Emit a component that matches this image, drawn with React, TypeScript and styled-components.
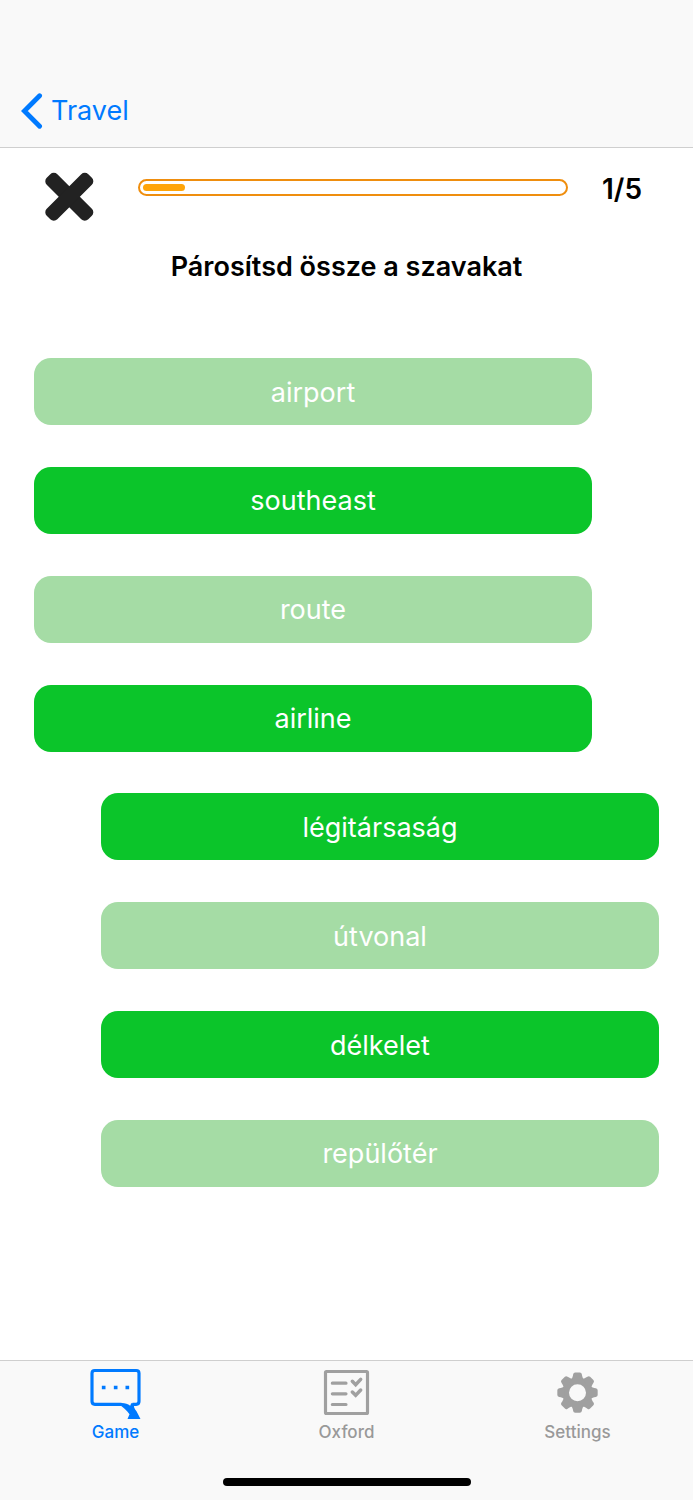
import React from "react";
import styled, { createGlobalStyle } from "styled-components";

const GlobalStyle = createGlobalStyle`
  * { box-sizing: border-box; }
  body {
    margin: 0;
    background: #fff;
    color: #000;
    font-family: Inter, "Liberation Sans", sans-serif;
  }
`;

const Screen = styled.div`
  display: flex;
  flex-direction: column;
  min-height: 100vh;
`;

const NavBar = styled.header`
  display: flex;
  padding: 89px 21px 14px;
  background: #f9f9f9;
  border-bottom: 1px solid #cfcfcf;
`;

const BackLink = styled.a`
  display: flex;
  align-items: center;
  gap: 8px;
  height: 44px;
  color: #007aff;
  font-size: 27px;
  line-height: 44px;
  text-decoration: none;
`;

const Game = styled.main`
  flex: 1;
  display: flex;
  flex-direction: column;
  padding: 24px 34px 173px;
`;

const StatusRow = styled.div`
  display: flex;
  align-items: flex-start;
  padding: 0 17px 0 10px;
`;

const CloseButton = styled.button`
  display: flex;
  margin: 0;
  padding: 0;
  border: 0;
  background: none;
  cursor: pointer;
`;

const Track = styled.div`
  flex: 1;
  height: 17px;
  margin: 7px 34px 0 44px;
  padding: 3px;
  border: 2px solid #ef8e0e;
  border-radius: 9px;
`;

const Fill = styled.div`
  height: 7px;
  border-radius: 4px;
  background: #ffa50a;
`;

const Counter = styled.span`
  font-size: 28px;
  font-weight: 600;
  line-height: 34px;
`;

const Title = styled.h1`
  margin: 28px 0 74px;
  font-size: 27px;
  font-weight: 600;
  line-height: 34px;
  text-align: center;
`;

const WordList = styled.div`
  flex: 1;
  display: flex;
  flex-direction: column;
  justify-content: space-between;
  gap: 16px;
`;

const WordButton = styled.button<{ $side: "left" | "right"; $matched: boolean }>`
  height: 67px;
  margin: ${(p) => (p.$side === "left" ? "0 67px 0 0" : "0 0 0 67px")};
  padding: 2px 16px 0;
  border: 0;
  border-radius: 17px;
  background: ${(p) => (p.$matched ? "#a5dca5" : "#0bc52a")};
  color: #fff;
  font: inherit;
  font-size: 27px;
  line-height: 34px;
  cursor: pointer;
`;

const TabBar = styled.nav`
  display: flex;
  padding-top: 7px;
  background: #f9f9f9;
  border-top: 1px solid #cfcfcf;
`;

const Tab = styled.a<{ $active?: boolean }>`
  flex: 1;
  display: flex;
  flex-direction: column;
  align-items: center;
  color: ${(p) => (p.$active ? "#007aff" : "#999")};
  font-size: 17px;
  font-weight: 500;
  line-height: 24px;
  text-decoration: none;
`;

const HomeArea = styled.footer`
  display: flex;
  justify-content: center;
  padding: 34px 0 14px;
  background: #f9f9f9;
`;

const HomeIndicator = styled.div`
  width: 248px;
  height: 8px;
  border-radius: 4px;
  background: #000;
`;

const BackIcon = () => (
  <svg width="22" height="36" viewBox="0 0 22 36" fill="none" aria-hidden="true">
    <path d="M18.600 2.800L3.400 18L18.600 33.200" stroke="currentColor" strokeWidth="4.800" strokeLinecap="round" strokeLinejoin="miter" />
  </svg>
);

const CrossIcon = () => (
  <svg width="50" height="50" viewBox="-25.300 -24.700 50 50" fill="#222" aria-hidden="true">
    <rect x="-29.400" y="-7.500" width="58.800" height="15" rx="5" transform="rotate(45)" />
    <rect x="-29.400" y="-7.500" width="58.800" height="15" rx="5" transform="rotate(-45)" />
  </svg>
);

const ChatIcon = () => (
  <svg width="52" height="52" viewBox="60.500 54 156 156" fill="none" aria-hidden="true">
    <path
      d="M155 163H75Q66.500 163 66.500 154V70Q66.500 61.500 75 61.500H199Q207.500 61.500 207.500 70V154Q207.500 163 199 163H188"
      stroke="currentColor"
      strokeWidth="9.500"
    />
    <path d="M146 160C158 172 172 182 179 193L173 207H212L200 184C194 177 191 170 192 160L184 160C182 165 182 166 181 167C174 162 166 159 156 159Z" fill="currentColor" />
    <path d="M96 107h11v11h-11zM132 107h11v11h-11zM167 107h11v11h-11z" fill="currentColor" />
  </svg>
);

const ChecklistIcon = () => (
  <svg width="52" height="52" viewBox="75 54 156 156" fill="none" stroke="#a0a0a0" aria-hidden="true">
    <rect x="88.500" y="64.500" width="126" height="126" rx="3" strokeWidth="9.500" />
    <path d="M109 99.500H150M109 131.500H150M109 163.500H150" strokeWidth="9.500" strokeLinecap="round" />
    <path d="M169 94L179 104L194 88M169 126L179 136L194 120" strokeWidth="10.500" strokeLinecap="round" />
  </svg>
);

const TEETH = [0, 45, 90, 135, 180, 225, 270, 315];

const GearIcon = () => (
  <svg width="52" height="52" viewBox="-76.500 -74 156 156" fill="#a0a0a0" aria-hidden="true">
    <circle r="35" fill="none" stroke="#a0a0a0" strokeWidth="19" />
    {TEETH.map((angle) => (
      <path
        key={angle}
        d="M-20 -38Q-15 -44 -14 -50L-13 -55Q-12 -60.500 -7 -60.500H7Q12 -60.500 13 -55L14 -50Q15 -44 20 -38Z"
        transform={`rotate(${angle})`}
      />
    ))}
  </svg>
);

const WORDS: { text: string; side: "left" | "right"; matched: boolean }[] = [
  { text: "airport", side: "left", matched: true },
  { text: "southeast", side: "left", matched: false },
  { text: "route", side: "left", matched: true },
  { text: "airline", side: "left", matched: false },
  { text: "légitársaság", side: "right", matched: false },
  { text: "útvonal", side: "right", matched: true },
  { text: "délkelet", side: "right", matched: false },
  { text: "repülőtér", side: "right", matched: true },
];

export default function App() {
  const progress = 10;

  return (
    <>
      <GlobalStyle />
      <Screen>
        <NavBar>
          <BackLink href="#travel">
            <BackIcon />
            Travel
          </BackLink>
        </NavBar>
        <Game>
          <StatusRow>
            <CloseButton type="button" aria-label="Close">
              <CrossIcon />
            </CloseButton>
            <Track role="progressbar" aria-label="Progress" aria-valuemin={0} aria-valuemax={100} aria-valuenow={progress}>
              <Fill style={{ width: `${progress}%` }} />
            </Track>
            <Counter>1/5</Counter>
          </StatusRow>
          <Title>Párosítsd össze a szavakat</Title>
          <WordList>
            {WORDS.map((word) => (
              <WordButton key={word.text} type="button" $side={word.side} $matched={word.matched}>
                {word.text}
              </WordButton>
            ))}
          </WordList>
        </Game>
        <TabBar>
          <Tab href="#game" $active aria-current="page">
            <ChatIcon />
            Game
          </Tab>
          <Tab href="#oxford">
            <ChecklistIcon />
            Oxford
          </Tab>
          <Tab href="#settings">
            <GearIcon />
            Settings
          </Tab>
        </TabBar>
        <HomeArea>
          <HomeIndicator />
        </HomeArea>
      </Screen>
    </>
  );
}
